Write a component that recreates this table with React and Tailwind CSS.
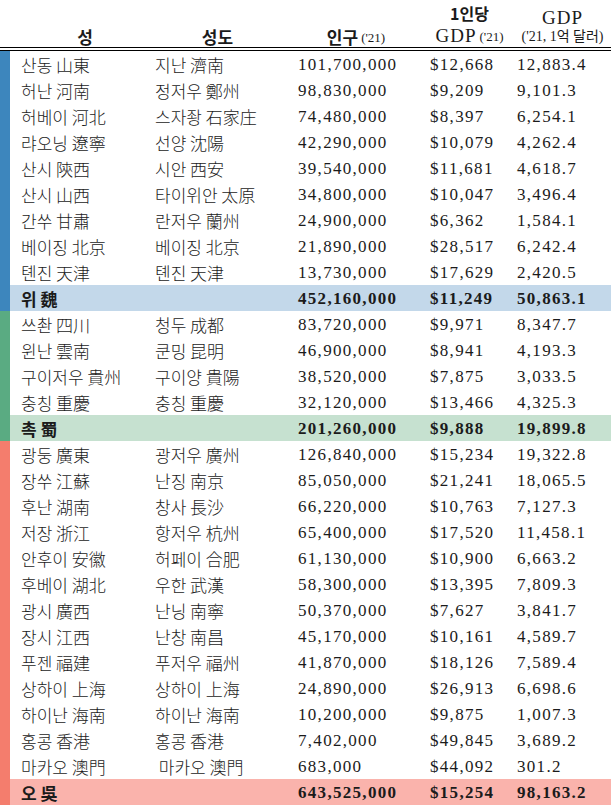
import React from "react";

const KR = "font-['Noto_Sans_CJK_KR',sans-serif]";
const NUM = "font-['Liberation_Serif','Noto_Sans_CJK_KR',serif] tracking-[1.3px]";

const groups = [
  {
    bar: "bg-[#3d86bd]",
    sumBg: "bg-[#c3d8ea]",
    rows: [
      ["산동 山東", "지난 濟南", "101,700,000", "$12,668", "12,883.4"],
      ["허난 河南", "정저우 鄭州", "98,830,000", "$9,209", "9,101.3"],
      ["허베이 河北", "스자좡 石家庄", "74,480,000", "$8,397", "6,254.1"],
      ["랴오닝 遼寧", "선양 沈陽", "42,290,000", "$10,079", "4,262.4"],
      ["산시 陝西", "시안 西安", "39,540,000", "$11,681", "4,618.7"],
      ["산시 山西", "타이위안 太原", "34,800,000", "$10,047", "3,496.4"],
      ["간쑤 甘肅", "란저우 蘭州", "24,900,000", "$6,362", "1,584.1"],
      ["베이징 北京", "베이징 北京", "21,890,000", "$28,517", "6,242.4"],
      ["톈진 天津", "톈진 天津", "13,730,000", "$17,629", "2,420.5"],
    ],
    sum: ["위 魏", "452,160,000", "$11,249", "50,863.1"],
  },
  {
    bar: "bg-[#5aab82]",
    sumBg: "bg-[#c6e1d0]",
    rows: [
      ["쓰촨 四川", "청두 成都", "83,720,000", "$9,971", "8,347.7"],
      ["윈난 雲南", "쿤밍 昆明", "46,900,000", "$8,941", "4,193.3"],
      ["구이저우 貴州", "구이양 貴陽", "38,520,000", "$7,875", "3,033.5"],
      ["충칭 重慶", "충칭 重慶", "32,120,000", "$13,466", "4,325.3"],
    ],
    sum: ["촉 蜀", "201,260,000", "$9,888", "19,899.8"],
  },
  {
    bar: "bg-[#f47d6d]",
    sumBg: "bg-[#fab3ac]",
    rows: [
      ["광둥 廣東", "광저우 廣州", "126,840,000", "$15,234", "19,322.8"],
      ["장쑤 江蘇", "난징 南京", "85,050,000", "$21,241", "18,065.5"],
      ["후난 湖南", "창사 長沙", "66,220,000", "$10,763", "7,127.3"],
      ["저장 浙江", "항저우 杭州", "65,400,000", "$17,520", "11,458.1"],
      ["안후이 安徽", "허페이 合肥", "61,130,000", "$10,900", "6,663.2"],
      ["후베이 湖北", "우한 武漢", "58,300,000", "$13,395", "7,809.3"],
      ["광시 廣西", "난닝 南寧", "50,370,000", "$7,627", "3,841.7"],
      ["장시 江西", "난창 南昌", "45,170,000", "$10,161", "4,589.7"],
      ["푸젠 福建", "푸저우 福州", "41,870,000", "$18,126", "7,589.4"],
      ["상하이 上海", "상하이 上海", "24,890,000", "$26,913", "6,698.6"],
      ["하이난 海南", "하이난 海南", "10,200,000", "$9,875", "1,007.3"],
      ["홍콩 香港", "홍콩 香港", "7,402,000", "$49,845", "3,689.2"],
      ["마카오 澳門", "\u00a0마카오 澳門", "683,000", "$44,092", "301.2"],
    ],
    sum: ["오 吳", "643,525,000", "$15,254", "98,163.2"],
  },
];

const cols = "grid grid-cols-[134px_143px_132px_87px_1fr]";

function Row({ cells, bold, bg }) {
  const kr = `${KR} text-[17px] pl-[11px] whitespace-pre leading-none ${bold ? "font-bold" : "font-light"}`;
  return (
    <div className={`${cols} h-[26px] items-center pt-[1px] text-[#1b1b1b] ${bg || ""} ${bold ? "font-bold" : ""}`}>
      <span className={kr}>{cells[0]}</span>
      <span className={kr}>{cells[1]}</span>
      <span className={`${NUM} text-[17px] pl-[11px] leading-none`}>{cells[2]}</span>
      <span className={`${NUM} text-[17px] pl-[11px] leading-none`}>{cells[3]}</span>
      <span className={`${NUM} text-[17px] pl-[11px] leading-none`}>{cells[4]}</span>
    </div>
  );
}

export default function App() {
  return (
    <div className="w-[611px] h-[805px] bg-white overflow-hidden text-[#1b1b1b]">
      {/* header */}
      <div className="h-[47px] flex">
        <div className="w-[10px]" />
        <div className={`${cols} flex-1`}>
          <div className={`${KR} font-bold text-[17px] flex items-end justify-center pb-[2px] pl-[16px] leading-none`}>성</div>
          <div className={`${KR} font-bold text-[17px] flex items-end justify-center pb-[2px] pl-[4px] leading-none`}>성도</div>
          <div className="flex items-end justify-center pb-[2px] pl-[6px] leading-none">
            <span className={`${KR} font-bold text-[17px]`}>인구</span>
            <span className="font-['Liberation_Serif',serif] text-[13px] ml-[3px] mb-[1px]">('21)</span>
          </div>
          <div className="flex flex-col items-center justify-end pb-[2px] pl-[14px] leading-none">
            <span className={`${KR} font-bold text-[16px] mb-[5px]`}>1인당</span>
            <span className="flex items-end">
              <span className="font-['Liberation_Serif',serif] text-[19px] tracking-[1px]">GDP</span>
              <span className="font-['Liberation_Serif',serif] text-[13px] ml-[3px] mb-[2px]">('21)</span>
            </span>
          </div>
          <div className="flex flex-col items-center justify-end pb-[3px] pl-[8px] leading-none">
            <span className="font-['Liberation_Serif',serif] text-[19px] tracking-[1px] mb-[3px]">GDP</span>
            <span className="font-['Liberation_Serif','Noto_Sans_CJK_KR',serif] text-[14px] whitespace-nowrap">('21, 1억 달러)</span>
          </div>
        </div>
      </div>
      <div className="h-[4px] border-t border-b border-black" />

      {/* body */}
      {groups.map((g, gi) => (
        <div key={gi} className="flex">
          <div className={`w-[10px] ${g.bar}`} />
          <div className="flex-1">
            {g.rows.map((r, i) => (
              <Row key={i} cells={r} />
            ))}
            <Row cells={[g.sum[0], "", g.sum[1], g.sum[2], g.sum[3]]} bold bg={g.sumBg} />
          </div>
        </div>
      ))}
    </div>
  );
}
